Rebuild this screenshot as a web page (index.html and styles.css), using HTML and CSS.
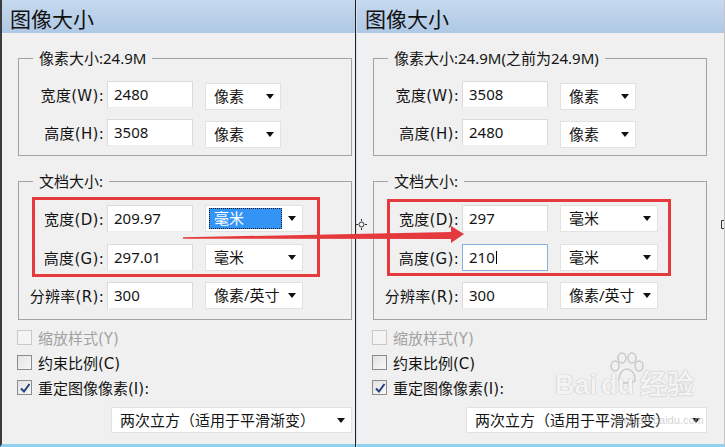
FILE: index.html
```html
<!DOCTYPE html>
<html lang="zh-CN">

<head>
    <meta charset="UTF-8">
    <meta name="viewport" content="width=device-width, initial-scale=1.0">
    <link rel="stylesheet" href="styles.css">
    <title>图像大小</title>
</head>

<body>
    <div class="screen">
        <!-- Before -->
        <div class="dialog dialog-left">
            <div class="titlebar">图像大小</div>

            <fieldset class="group group-pixels">
                <legend>像素大小:24.9M</legend>
                <div class="row">
                    <span class="label">宽度(W):</span>
                    <div class="field">2480</div>
                    <div class="select select-short"><span class="select-text">像素</span><span class="caret"></span></div>
                </div>
                <div class="row">
                    <span class="label">高度(H):</span>
                    <div class="field">3508</div>
                    <div class="select select-short"><span class="select-text">像素</span><span class="caret"></span></div>
                </div>
            </fieldset>

            <fieldset class="group group-doc">
                <legend>文档大小:</legend>
                <div class="row">
                    <span class="label">宽度(D):</span>
                    <div class="field">209.97</div>
                    <div class="select select-mid"><span class="select-text selected">毫米</span><span class="caret"></span></div>
                </div>
                <div class="row">
                    <span class="label">高度(G):</span>
                    <div class="field">297.01</div>
                    <div class="select select-mid"><span class="select-text">毫米</span><span class="caret"></span></div>
                </div>
                <div class="row">
                    <span class="label">分辨率(R):</span>
                    <div class="field">300</div>
                    <div class="select select-mid"><span class="select-text">像素/英寸</span><span class="caret"></span></div>
                </div>
            </fieldset>

            <div class="checks">
                <div class="check disabled"><span class="box"></span>缩放样式(Y)</div>
                <div class="check"><span class="box"></span>约束比例(C)</div>
                <div class="check"><span class="box checked"><svg width="12" height="12" viewBox="0 0 12 12"><path d="M2 6.5 L5 9.5 L10.5 2" fill="none" stroke="#24407e" stroke-width="2"/></svg></span>重定图像像素(I):</div>
            </div>

            <div class="select select-wide"><span class="select-text">两次立方（适用于平滑渐变）</span><span class="caret"></span></div>
        </div>

        <div class="divider"></div>

        <!-- After -->
        <div class="dialog dialog-right">
            <div class="titlebar">图像大小</div>

            <fieldset class="group group-pixels">
                <legend>像素大小:24.9M(之前为24.9M)</legend>
                <div class="row">
                    <span class="label">宽度(W):</span>
                    <div class="field">3508</div>
                    <div class="select select-short"><span class="select-text">像素</span><span class="caret"></span></div>
                </div>
                <div class="row">
                    <span class="label">高度(H):</span>
                    <div class="field">2480</div>
                    <div class="select select-short"><span class="select-text">像素</span><span class="caret"></span></div>
                </div>
            </fieldset>

            <fieldset class="group group-doc">
                <legend>文档大小:</legend>
                <div class="row">
                    <span class="label">宽度(D):</span>
                    <div class="field">297</div>
                    <div class="select select-mid"><span class="select-text">毫米</span><span class="caret"></span></div>
                </div>
                <div class="row">
                    <span class="label">高度(G):</span>
                    <div class="field focused">210<span class="cursor"></span></div>
                    <div class="select select-mid"><span class="select-text">毫米</span><span class="caret"></span></div>
                </div>
                <div class="row">
                    <span class="label">分辨率(R):</span>
                    <div class="field">300</div>
                    <div class="select select-mid"><span class="select-text">像素/英寸</span><span class="caret"></span></div>
                </div>
            </fieldset>

            <div class="checks">
                <div class="check disabled"><span class="box"></span>缩放样式(Y)</div>
                <div class="check"><span class="box"></span>约束比例(C)</div>
                <div class="check"><span class="box checked"><svg width="12" height="12" viewBox="0 0 12 12"><path d="M2 6.5 L5 9.5 L10.5 2" fill="none" stroke="#24407e" stroke-width="2"/></svg></span>重定图像像素(I):</div>
            </div>

            <div class="select select-wide"><span class="select-text">两次立方（适用于平滑渐变）</span><span class="caret"></span></div>

            <!-- watermark -->
            <div class="watermark">
                <svg class="paw" width="40" height="34" viewBox="0 0 40 34">
                    <g fill="none" stroke="#c9c9c9" stroke-width="1.5">
                        <ellipse cx="8" cy="14" rx="4" ry="5"/>
                        <ellipse cx="15" cy="6" rx="4" ry="5"/>
                        <ellipse cx="25" cy="6" rx="4" ry="5"/>
                        <ellipse cx="32" cy="14" rx="4" ry="5"/>
                        <path d="M12 28 C12 20 17 17 20 17 C23 17 28 20 28 28 C28 32 12 32 12 28 Z"/>
                    </g>
                </svg>
                <span class="wm-text">Bai<span class="wm-du">du</span>经验</span>
                <span class="wm-url">jingyan.baidu.com</span>
            </div>
        </div>

        <!-- red annotations -->
        <svg class="marks" width="725" height="447" viewBox="0 0 725 447">
            <rect x="33.5" y="198.5" width="285" height="77" fill="none" stroke="#e53a3d" stroke-width="3"/>
            <rect x="388.5" y="200.5" width="281" height="74" fill="none" stroke="#e53a3d" stroke-width="3"/>
            <polygon points="183,237.3 451,232 451,226 464,234 451,243 451,239 183,238.7" fill="#e53a3d"/>
            <g fill="none" stroke="#333" stroke-width="1">
                <circle cx="361.5" cy="224.5" r="2.5"/>
                <path d="M361.5 219 V221 M361.5 228 V230 M356 224.5 H358 M365 224.5 H367"/>
                <path d="M724 220.5 H721.5 V228.5 H724"/>
            </g>
        </svg>
    </div>
</body>
</html>
```

FILE: styles.css
```css
body {
    margin: 0;
    background-color: #f0f0f0;
    font-family: "Noto Sans", "Noto Sans CJK SC", sans-serif;
    font-size: 15px;
    color: #141414;
}

.screen {
    display: flex;
    position: relative;
    width: 725px;
    height: 447px;
    overflow: hidden;
}

.dialog {
    position: relative;
    box-sizing: border-box;
    height: 447px;
    background-color: #f0f0f0;
    border-bottom: 3px solid #8fd0ec;
}

.dialog-left {
    width: 355px;
    border-left: 2px solid #3b3b3b;
}

.dialog-right {
    width: 368px;
    border-right: 1px solid #c4c4c4;
}

.divider {
    box-sizing: border-box;
    width: 2px;
    height: 447px;
    border-left: 1px solid #1f1f1f;
    background-color: #cfe2f3;
}

.titlebar {
    box-sizing: border-box;
    height: 33px;
    padding: 3px 0 0 8px;
    font-family: "Noto Sans CJK SC", sans-serif;
    font-size: 21px;
    line-height: 30px;
    color: #111;
    background: linear-gradient(to bottom, #c6d9ee 0%, #afc8e5 100%);
}

/* group boxes */
.group {
    width: 334px;
    box-sizing: border-box;
    margin: 17px 0 0 16px;
    padding: 0;
    border: 1px solid #a3a3a3;
    min-width: 0;
}

.group legend {
    margin-left: 14px;
    padding: 0 6px;
    line-height: 16px;
}

.group-pixels {
    padding: 15px 0 9px 0;
}

.group-doc {
    padding: 16px 0 10px 0;
}

.row {
    display: flex;
    align-items: center;
    height: 27px;
}

.row + .row {
    margin-top: 11px;
}

.group-doc .row + .row {
    margin-top: 11.5px;
}

.label {
    width: 85px;
    text-align: right;
    white-space: nowrap;
    font-family: "DejaVu Sans", "Noto Sans CJK SC", sans-serif;
    letter-spacing: 0.3px;
}

.field {
    position: relative;
    box-sizing: border-box;
    width: 86px;
    height: 27px;
    margin-left: 3px;
    padding-left: 6px;
    line-height: 25px;
    background-color: #fff;
    border: 1px solid #dadada;
    border-bottom-color: #ececec;
}

.field.focused {
    border-color: #86afd9;
}

.cursor {
    display: inline-block;
    width: 1px;
    height: 13px;
    margin-left: 1px;
    vertical-align: -1px;
    background-color: #000;
}

.select {
    display: flex;
    align-items: center;
    justify-content: space-between;
    box-sizing: border-box;
    height: 27px;
    margin-left: 12px;
    padding: 0 6px 0 3px;
    background-color: #fff;
    border: 1px solid #e2e2e2;
    white-space: nowrap;
}

.select-short {
    width: 76px;
    margin-top: 3px;
}

.select-mid {
    width: 98px;
}

.select-text {
    padding: 0 4px;
    line-height: 19px;
    border: 1px solid transparent;
}

.select-text.selected {
    width: 63px;
    color: #fff;
    background-color: #3394f6;
    border: 1px dotted #1a1a1a;
}

.caret {
    width: 0;
    height: 0;
    border-left: 4.5px solid transparent;
    border-right: 4.5px solid transparent;
    border-top: 5px solid #111;
}

/* checkboxes */
.checks {
    margin: 5px 0 0 15px;
    font-family: "DejaVu Sans", "Noto Sans CJK SC", sans-serif;
}

.check {
    display: flex;
    align-items: center;
    height: 25px;
}

.check.disabled {
    color: #a2a2a2;
}

.box {
    display: flex;
    align-items: center;
    justify-content: center;
    box-sizing: border-box;
    width: 15px;
    height: 15px;
    margin-right: 6px;
    border: 1px solid #8c8c8c;
    background: linear-gradient(to bottom right, #e3e3e3, #f7f7f7);
}

.check.disabled .box {
    border-color: #c9c9c9;
    background: #f4f4f4;
}

.select-wide {
    width: 241px;
    height: 26px;
    margin: 7px 0 0 109px;
    padding: 0 6px 0 3px;
}

/* watermark */
.watermark {
    position: absolute;
    left: 198px;
    top: 352px;
    width: 140px;
    height: 74px;
}

.paw {
    position: absolute;
    left: 52px;
    top: 0;
}

.wm-text {
    position: absolute;
    left: 0;
    top: 18px;
    font-family: "Liberation Sans", sans-serif;
    font-size: 27px;
    line-height: 31px;
    font-weight: bold;
    color: rgba(255, 255, 255, 0.85);
    text-shadow: 0 0 1px #b8b8b8, 0 0 1px #b8b8b8;
    white-space: nowrap;
}

.wm-du {
    margin: 0 6px 0 4px;
}

.wm-url {
    position: absolute;
    left: 60px;
    top: 62px;
    font-family: "Liberation Sans", sans-serif;
    font-size: 11px;
    color: rgba(190, 190, 190, 0.7);
}

.marks {
    position: absolute;
    left: 0;
    top: 0;
    pointer-events: none;
}
```
